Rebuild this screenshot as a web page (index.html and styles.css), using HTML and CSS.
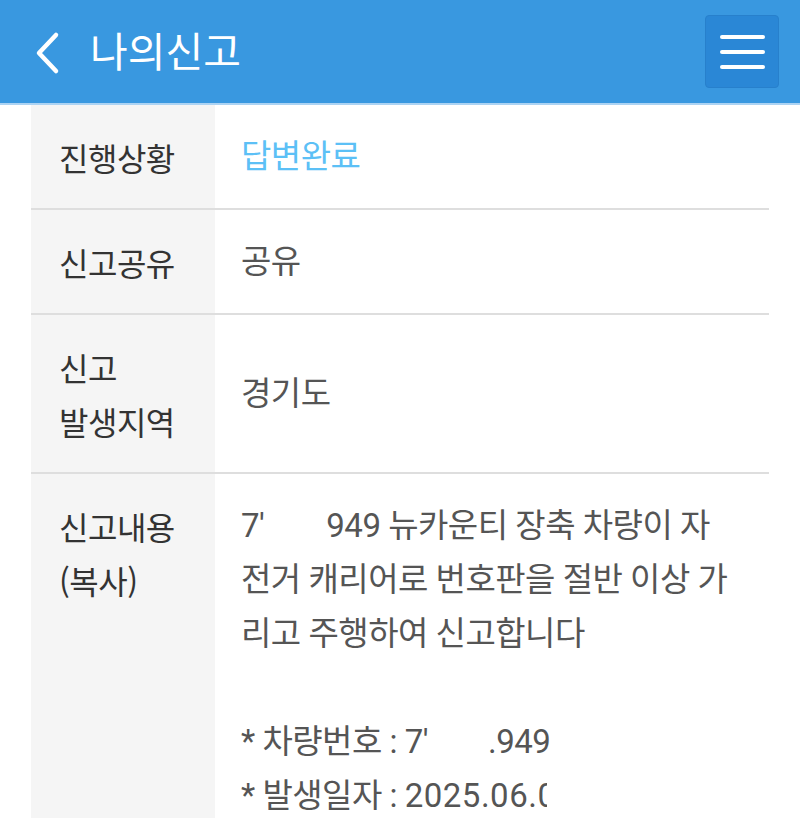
FILE: index.html
```html
<!DOCTYPE html>
<html lang="ko">
<head>
<meta charset="utf-8">
<title>나의신고</title>
<link rel="stylesheet" href="styles.css">
</head>
<body>
<header class="topbar">
  <div class="left">
    <svg class="back" width="30" height="44" viewBox="0 0 30 44"><path d="M24 4 L7 22 L24 40" fill="none" stroke="#fff" stroke-width="4.5" stroke-linecap="round" stroke-linejoin="round"/></svg>
    <h1 class="title">나의신고</h1>
  </div>
  <button class="menu" aria-label="menu">
    <span></span><span></span><span></span>
  </button>
</header>
<div class="header-line"></div>
<table class="info">
  <tr>
    <th>진행상황</th>
    <td class="status">답변완료</td>
  </tr>
  <tr>
    <th>신고공유</th>
    <td>공유</td>
  </tr>
  <tr>
    <th>신고<br>발생지역</th>
    <td>경기도</td>
  </tr>
  <tr class="last">
    <th class="top">신고내용<br>(복사)</th>
    <td class="content">7′<span class="gap g1"></span>949 뉴카운티 장축 차량이 자<br>전거 캐리어로 번호판을 절반 이상 가<br>리고 주행하여 신고합니다<br><br>* 차량번호 : 7′<span class="gap g2"></span>.949<br>* 발생일자 : <span class="num">2025.06.</span><span class="cut">0</span></td>
  </tr>
</table>
</body>
</html>
```
FILE: styles.css
```css
html, body {
  margin: 0;
  padding: 0;
  background: #fff;
  font-family: Roboto, "Noto Sans CJK KR", sans-serif;
}
.topbar {
  height: 103px;
  background: #3998e0;
  display: flex;
  align-items: center;
  justify-content: space-between;
  padding: 0 21px 0 32px;
  box-sizing: border-box;
}
.left {
  display: flex;
  align-items: center;
}
.back {
  display: block;
  margin-right: 28px;
  margin-top: 2px;
}
.title {
  margin: 0;
  color: #fff;
  font-family: "Noto Sans CJK KR", sans-serif;
  font-weight: 400;
  font-size: 41px;
  letter-spacing: 0;
  line-height: 1;
  margin-top: -4px;
}
.menu {
  width: 74px;
  height: 73px;
  background: #2a87d6;
  border: 1px solid #2780cc;
  border-radius: 4px;
  padding: 0;
  display: flex;
  flex-direction: column;
  align-items: center;
  justify-content: center;
  gap: 11px;
  box-sizing: border-box;
}
.menu span {
  display: block;
  width: 45px;
  height: 4px;
  border-radius: 2px;
  background: #fff;
}
.header-line {
  height: 2px;
  background: #acd3f3;
}
.info {
  margin: 0 31px;
  width: 738px;
  border-collapse: collapse;
  line-height: 54px;
}
.info th {
  width: 184px;
  background: #f5f5f5;
  color: #333;
  font-weight: 400;
  font-size: 32px;
  text-align: left;
  vertical-align: middle;
  padding: 24.5px 0 24.5px 28px;
  box-sizing: border-box;
  font-family: "Noto Sans CJK KR", sans-serif;
  letter-spacing: -0.5px;
}
.info th.top {
  vertical-align: top;
}
.info td {
  color: #555;
  font-size: 33px;
  padding: 24.5px 20px 24.5px 26px;
  vertical-align: middle;
  letter-spacing: -0.5px;
  white-space: nowrap;
}
.info tr {
  border-bottom: 2px solid #dedede;
}
.info tr.last {
  border-bottom: none;
}
.info td.status {
  color: #5cc0f6;
}
.info td.content {
  vertical-align: top;
}
.num {
  letter-spacing: 0.5px;
}
.gap {
  display: inline-block;
  height: 1px;
}
.g1 { width: 62px; }
.g2 { width: 60px; }
.cut {
  display: inline-block;
  width: 10px;
  overflow: hidden;
  vertical-align: top;
}
```
